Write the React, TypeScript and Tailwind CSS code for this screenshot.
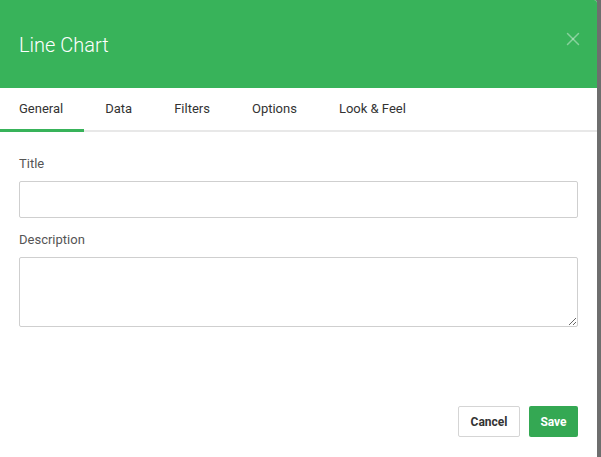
import { X } from "lucide-react";

const tabs = ["General", "Data", "Filters", "Options", "Look & Feel"];

function App() {
  return (
    <div
      className="h-screen w-full flex bg-[#6e6e6e]"
      style={{ fontFamily: "Roboto, 'Liberation Sans', sans-serif" }}
    >
      <div className="w-[597px] h-full flex flex-col bg-white rounded-tr-[3px] overflow-hidden">
        {/* Header */}
        <div className="h-[88px] bg-[#38b35a] flex items-center justify-between pl-[19px] pr-[13px] shrink-0">
          <h1 className="text-[20px] text-white font-light leading-none pt-[1px]">Line Chart</h1>
          <button className="text-white/40 -mt-[10px]">
            <X size={22} strokeWidth={1.6} />
          </button>
        </div>

        {/* Tabs */}
        <div className="flex border-b-2 border-[#e8e8e8] h-[44px] shrink-0">
          {tabs.map((t, i) => (
            <div
              key={t}
              className={`flex items-center text-[13px] text-[#333] pr-[21px] ${
                i === 0 ? "pl-[19px] border-b-[3px] border-[#38b35a] -mb-[2px]" : "pl-[21px]"
              }`}
            >
              {t}
            </div>
          ))}
        </div>

        {/* Body */}
        <div className="flex-1 px-[19px] pt-[24px] flex flex-col">
          <label className="text-[13px] text-[#555] leading-[16px] mb-[9px]">Title</label>
          <input
            type="text"
            className="h-[37px] border border-[#cfcfcf] rounded-[2px] px-2 outline-none"
          />
          <label className="text-[13px] text-[#555] leading-[16px] mt-[14px] mb-[9px]">Description</label>
          <textarea className="h-[70px] border border-[#cfcfcf] rounded-[2px] px-2 outline-none resize-y" />
        </div>

        {/* Footer */}
        <div className="flex justify-end gap-[9px] px-[19px] pb-[20px] shrink-0">
          <button className="h-[31px] w-[62px] border border-[#d5d5d5] rounded-[2px] bg-white text-[12px] font-bold text-[#333]">
            Cancel
          </button>
          <button className="h-[31px] w-[49px] rounded-[2px] bg-[#34a853] text-[12px] font-bold text-white">
            Save
          </button>
        </div>
      </div>
    </div>
  );
}

export default App;
